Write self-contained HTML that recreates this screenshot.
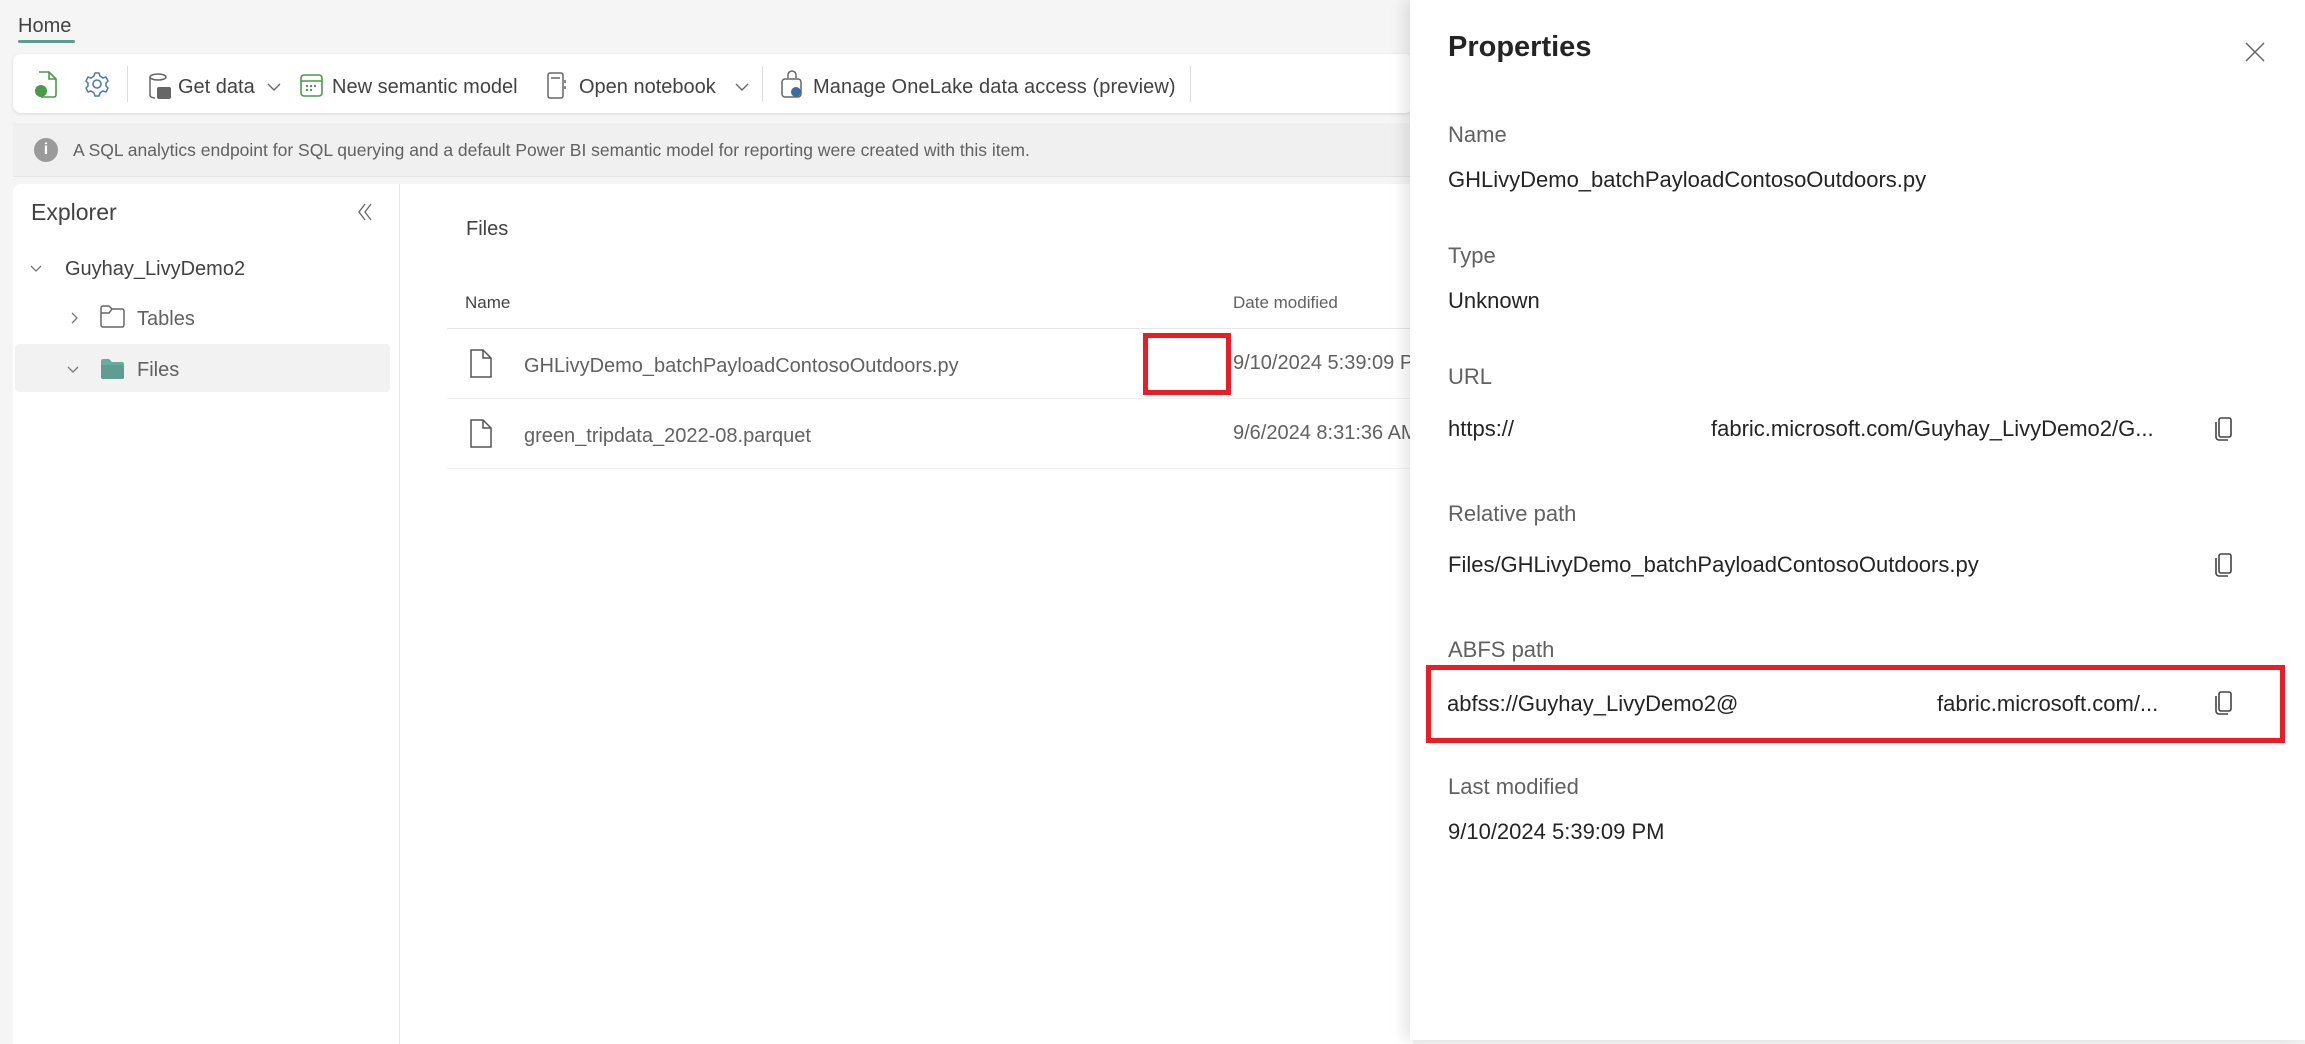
<!DOCTYPE html>
<html><head><meta charset="utf-8"><style>
*{box-sizing:border-box;margin:0;padding:0}
body{width:2305px;height:1040px;overflow:hidden;background:#f5f5f5;font-family:"Segoe UI","Liberation Sans",sans-serif;position:relative;color:#242424}
.a{position:absolute;white-space:nowrap}
.g{color:#616161}
</style></head><body>
<div class="a" style="left:18px;top:15px;font-size:20px;color:#424242">Home</div>
<div class="a" style="left:18px;top:40px;width:57px;height:3px;background:#5a9e8f;border-radius:2px"></div>
<!-- toolbar -->
<div class="a" style="left:13px;top:54px;width:1400px;height:59px;background:#fff;border-radius:8px;box-shadow:0 1px 3px rgba(0,0,0,.12)"></div>
<svg class="a" style="left:34px;top:70px" width="26" height="28" viewBox="0 0 26 28"><path d="M5 2h10l7 7v16a2 2 0 0 1-2 2H7" fill="none" stroke="#4a9a4a" stroke-width="1.6"/><path d="M15 2v7h7" fill="none" stroke="#4a9a4a" stroke-width="1.6"/><circle cx="7" cy="21" r="6" fill="#4a9a4a"/></svg>
<svg class="a" style="left:84px;top:70px" width="26" height="28" viewBox="0 0 26 26"><circle cx="13" cy="13" r="4" fill="none" stroke="#4b7bab" stroke-width="1.6"/><path d="M11 2h4l1 3 3 2 3-1 2 4-2 2v3l2 2-2 4-3-1-3 2-1 3h-4l-1-3-3-2-3 1-2-4 2-2v-3l-2-2 2-4 3 1 3-2z" fill="none" stroke="#4b7bab" stroke-width="1.5"/></svg>
<div class="a" style="left:127px;top:66px;width:1px;height:36px;background:#ddd"></div>
<svg class="a" style="left:148px;top:72px" width="24" height="28" viewBox="0 0 24 28"><ellipse cx="10" cy="5" rx="8" ry="3" fill="none" stroke="#666" stroke-width="1.5"/><path d="M2 5v18c0 2 3 3 5 3" fill="none" stroke="#666" stroke-width="1.5"/><rect x="9" y="15" width="14" height="12" rx="2" fill="#666"/></svg>
<div class="a" style="left:178px;top:76px;font-size:20px;color:#424242">Get data</div>
<svg class="a" style="left:266px;top:82px" width="16" height="10"><path d="M2 2l6 6 6-6" fill="none" stroke="#666" stroke-width="1.4"/></svg>
<svg class="a" style="left:300px;top:74px" width="24" height="24"><rect x="1" y="1" width="21" height="21" rx="3" fill="none" stroke="#4a9a4a" stroke-width="1.6"/><path d="M1 7h21" stroke="#4a9a4a" stroke-width="1.6"/><g fill="#4a9a4a"><rect x="6" y="11" width="2" height="2"/><rect x="10" y="11" width="2" height="2"/><rect x="14" y="11" width="2" height="2"/><rect x="6" y="15" width="2" height="2"/><rect x="10" y="15" width="2" height="2"/></g></svg>
<div class="a" style="left:332px;top:76px;font-size:20px;color:#424242">New semantic model</div>
<svg class="a" style="left:547px;top:72px" width="20" height="28"><rect x="1" y="1" width="15" height="25" rx="2" fill="none" stroke="#666" stroke-width="1.5"/><path d="M4 6h9M18 8v3M18 14v3" stroke="#666" stroke-width="1.5"/></svg>
<div class="a" style="left:579px;top:76px;font-size:20px;color:#424242">Open notebook</div>
<svg class="a" style="left:734px;top:82px" width="16" height="10"><path d="M2 2l6 6 6-6" fill="none" stroke="#666" stroke-width="1.4"/></svg>
<div class="a" style="left:762px;top:66px;width:1px;height:36px;background:#ddd"></div>
<svg class="a" style="left:780px;top:70px" width="24" height="30"><path d="M8 8V5a4 4 0 0 1 8 0v3" fill="none" stroke="#666" stroke-width="1.5"/><rect x="2" y="9" width="19" height="18" rx="3" fill="none" stroke="#666" stroke-width="1.5"/><circle cx="16" cy="22" r="5" fill="#3a6ea5"/></svg>
<div class="a" style="left:813px;top:76px;font-size:20px;color:#424242;letter-spacing:0.1px">Manage OneLake data access (preview)</div>
<div class="a" style="left:1190px;top:66px;width:1px;height:36px;background:#ddd"></div>
<!-- info bar -->
<div class="a" style="left:13px;top:123px;width:1400px;height:54px;background:#f0f0f0;border-bottom:1px solid #e4e4e4"></div>
<div class="a" style="left:34px;top:138px;width:24px;height:24px;border-radius:50%;background:#9a9a9a;color:#fff;font-size:16px;text-align:center;line-height:24px;font-weight:bold">i</div>
<div class="a" style="left:73px;top:140px;font-size:17.5px;color:#616161">A SQL analytics endpoint for SQL querying and a default Power BI semantic model for reporting were created with this item.</div>
<!-- explorer -->
<div class="a" style="left:13px;top:184px;width:1400px;height:860px;background:#fff;border-radius:8px 0 0 0"></div>
<div class="a" style="left:399px;top:184px;width:1px;height:860px;background:#e6e6e6"></div>
<div class="a" style="left:31px;top:199px;font-size:23px;color:#424242">Explorer</div>
<svg class="a" style="left:356px;top:202px" width="20" height="20"><path d="M9 2L3 10l6 8M15 2l-6 8 6 8" fill="none" stroke="#666" stroke-width="1.3"/></svg>
<svg class="a" style="left:29px;top:264px" width="14" height="10"><path d="M2 2l5 5 5-5" fill="none" stroke="#777" stroke-width="1.3"/></svg>
<div class="a" style="left:65px;top:258px;font-size:20px;color:#424242">Guyhay_LivyDemo2</div>
<svg class="a" style="left:70px;top:311px" width="10" height="14"><path d="M2 2l5 5-5 5" fill="none" stroke="#777" stroke-width="1.3"/></svg>
<svg class="a" style="left:100px;top:305px" width="26" height="24"><path d="M1 3a2 2 0 0 1 2-2h6l3 3h10a2 2 0 0 1 2 2v14a2 2 0 0 1-2 2H3a2 2 0 0 1-2-2z" fill="none" stroke="#666" stroke-width="1.5"/><path d="M1 8h8l3-4" fill="none" stroke="#666" stroke-width="1.5"/></svg>
<div class="a" style="left:137px;top:308px;font-size:20px;color:#616161">Tables</div>
<div class="a" style="left:15px;top:344px;width:375px;height:48px;background:#f2f2f2;border-radius:4px"></div>
<svg class="a" style="left:66px;top:365px" width="14" height="10"><path d="M2 2l5 5 5-5" fill="none" stroke="#777" stroke-width="1.3"/></svg>
<svg class="a" style="left:100px;top:355px" width="26" height="26"><path d="M1 6a2 2 0 0 1 2-2h6l3 3h10a2 2 0 0 1 2 2v13a2 2 0 0 1-2 2H3a2 2 0 0 1-2-2z" fill="#6aaa9c"/><rect x="1" y="10" width="23" height="14" rx="2" fill="#5e9e90"/></svg>
<div class="a" style="left:137px;top:359px;font-size:20px;color:#616161">Files</div>
<!-- files list -->
<div class="a" style="left:466px;top:218px;font-size:20px;color:#424242">Files</div>
<div class="a" style="left:465px;top:293px;font-size:17px;color:#424242">Name</div>
<div class="a" style="left:1233px;top:293px;font-size:17px;color:#616161">Date modified</div>
<div class="a" style="left:447px;top:328px;width:963px;height:1px;background:#e6e6e6"></div>
<div class="a" style="left:447px;top:398px;width:963px;height:1px;background:#f0f0f0"></div>
<div class="a" style="left:447px;top:468px;width:963px;height:1px;background:#f0f0f0"></div>
<svg class="a" style="left:469px;top:348px" width="24" height="32"><path d="M2 2h12l8 8v19H2z M14 2v8h8" fill="none" stroke="#555" stroke-width="1.5"/></svg>
<div class="a" style="left:524px;top:355px;font-size:20px;color:#616161">GHLivyDemo_batchPayloadContosoOutdoors.py</div>
<div class="a" style="left:1233px;top:352px;font-size:20px;color:#616161">9/10/2024 5:39:09 PM</div>
<svg class="a" style="left:469px;top:418px" width="24" height="32"><path d="M2 2h12l8 8v19H2z M14 2v8h8" fill="none" stroke="#555" stroke-width="1.5"/></svg>
<div class="a" style="left:524px;top:425px;font-size:20px;color:#616161">green_tripdata_2022-08.parquet</div>
<div class="a" style="left:1233px;top:422px;font-size:20px;color:#616161">9/6/2024 8:31:36 AM</div>
<div class="a" style="left:1143px;top:333px;width:88px;height:62px;border:5px solid #ed1c24"></div>
<!-- properties panel -->
<div class="a" style="left:1410px;top:0;width:895px;height:1040px;background:#fff;box-shadow:-6px 0 14px rgba(0,0,0,.1)"></div>
<div class="a" style="left:1448px;top:31px;font-size:29px;font-weight:bold;color:#242424">Properties</div>
<svg class="a" style="left:2244px;top:41px" width="22" height="22"><path d="M2 2l18 18M20 2L2 20" stroke="#666" stroke-width="1.5"/></svg>
<div class="a g" style="left:1448px;top:122px;font-size:22px">Name</div>
<div class="a" style="left:1448px;top:167px;font-size:22px">GHLivyDemo_batchPayloadContosoOutdoors.py</div>
<div class="a g" style="left:1448px;top:243px;font-size:22px">Type</div>
<div class="a" style="left:1448px;top:288px;font-size:22px">Unknown</div>
<div class="a g" style="left:1448px;top:364px;font-size:22px">URL</div>
<div class="a" style="left:1448px;top:416px;font-size:22px">https://</div>
<div class="a" style="left:1711px;top:416px;font-size:22px">fabric.microsoft.com/Guyhay_LivyDemo2/G...</div>
<div class="a g" style="left:1448px;top:501px;font-size:22px">Relative path</div>
<div class="a" style="left:1448px;top:552px;font-size:22px">Files/GHLivyDemo_batchPayloadContosoOutdoors.py</div>
<div class="a g" style="left:1448px;top:637px;font-size:22px">ABFS path</div>
<div class="a" style="left:1447px;top:691px;font-size:22px">abfss://Guyhay_LivyDemo2@</div>
<div class="a" style="left:1937px;top:691px;font-size:22px">fabric.microsoft.com/...</div>
<div class="a g" style="left:1448px;top:774px;font-size:22px">Last modified</div>
<div class="a" style="left:1448px;top:819px;font-size:22px">9/10/2024 5:39:09 PM</div>
<svg class="a" style="left:2214px;top:416px" width="20" height="26"><rect x="5" y="2" width="12" height="19" rx="2" fill="none" stroke="#444" stroke-width="1.6"/><path d="M2 6v15a3 3 0 0 0 3 3h9" fill="none" stroke="#444" stroke-width="1.6"/></svg>
<svg class="a" style="left:2214px;top:552px" width="20" height="26"><rect x="5" y="2" width="12" height="19" rx="2" fill="none" stroke="#444" stroke-width="1.6"/><path d="M2 6v15a3 3 0 0 0 3 3h9" fill="none" stroke="#444" stroke-width="1.6"/></svg>
<svg class="a" style="left:2214px;top:690px" width="20" height="26"><rect x="5" y="2" width="12" height="19" rx="2" fill="none" stroke="#444" stroke-width="1.6"/><path d="M2 6v15a3 3 0 0 0 3 3h9" fill="none" stroke="#444" stroke-width="1.6"/></svg>
<div class="a" style="left:1426px;top:665px;width:859px;height:78px;border:5px solid #ed1c24"></div>
</body></html>
